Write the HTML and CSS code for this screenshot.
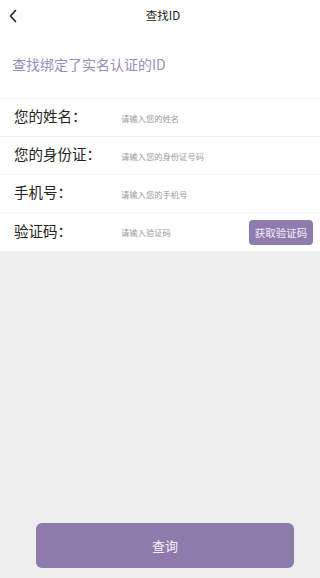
FILE: index.html
```html
<!DOCTYPE html>
<html lang="zh-CN">
<head>
<meta charset="utf-8">
<link rel="stylesheet" href="styles.css">
</head>
<body>
<div class="page">
  <div class="top">
    <header class="header">
      <span class="back"><svg width="10" height="14" viewBox="0 0 10 14"><path d="M7.5 1.5 L2.5 7 L7.5 12.5" fill="none" stroke="#222" stroke-width="1.6" stroke-linecap="round" stroke-linejoin="round"/></svg></span>
      <span class="title">查找ID</span>
    </header>
    <div class="subtitle">查找绑定了实名认证的ID</div>
    <div class="form">
      <div class="row"><span class="label">您的姓名：</span><span class="ph">请输入您的姓名</span></div>
      <div class="row"><span class="label">您的身份证：</span><span class="ph">请输入您的身份证号码</span></div>
      <div class="row"><span class="label">手机号：</span><span class="ph">请输入您的手机号</span></div>
      <div class="row"><span class="label">验证码：</span><span class="ph">请输入验证码</span><span class="code-btn">获取验证码</span></div>
    </div>
  </div>
  <div class="rest">
    <div class="query">查询</div>
  </div>
</div>
</body>
</html>
```
FILE: styles.css
```css
* { box-sizing: border-box; }
html, body { margin: 0; padding: 0; }
body {
  font-family: "Noto Sans CJK SC", "Noto Sans", sans-serif;
  background: #eeeeee;
}
.page {
  width: 320px;
  height: 578px;
  display: flex;
  flex-direction: column;
}
.top { background: #ffffff; }
.header {
  height: 32px;
  display: flex;
  align-items: center;
  justify-content: center;
  padding: 0 0 2px 6px;
  position: relative;
}
.back {
  position: absolute;
  left: 8px;
  top: 9px;
  display: flex;
}
.title {
  font-size: 11.5px;
  color: #222222;
}
.subtitle {
  height: 66px;
  padding: 21px 0 0 12px;
  font-size: 14px;
  line-height: 22px;
  color: #9c8cbb;
}
.form { border-top: 1px solid #f2f2f2; }
.row {
  height: 38px;
  display: flex;
  align-items: center;
  padding-left: 14px;
  border-bottom: 1px solid #f2f2f2;
}
.row:last-child { border-bottom: none; height: 38px; }
.label {
  width: 107px;
  font-size: 14.5px;
  line-height: 20px;
  margin-top: -3px;
  color: #222222;
}
.ph {
  font-size: 8.3px;
  color: #9a9a9a;
  flex: 1;
}
.code-btn {
  width: 64px;
  height: 25px;
  margin-right: 7px;
  border-radius: 4px;
  background: #8f7bad;
  color: #f2eff6;
  font-size: 10.5px;
  display: flex;
  align-items: center;
  justify-content: center;
}
.rest {
  flex: 1;
  display: flex;
  flex-direction: column;
  justify-content: flex-end;
  align-items: flex-start;
  padding: 0 0 10px 36px;
}
.query {
  width: 258px;
  height: 45px;
  border-radius: 6px;
  background: #8e7bab;
  color: #f3f0f7;
  font-size: 13px;
  display: flex;
  align-items: center;
  justify-content: center;
}
```
